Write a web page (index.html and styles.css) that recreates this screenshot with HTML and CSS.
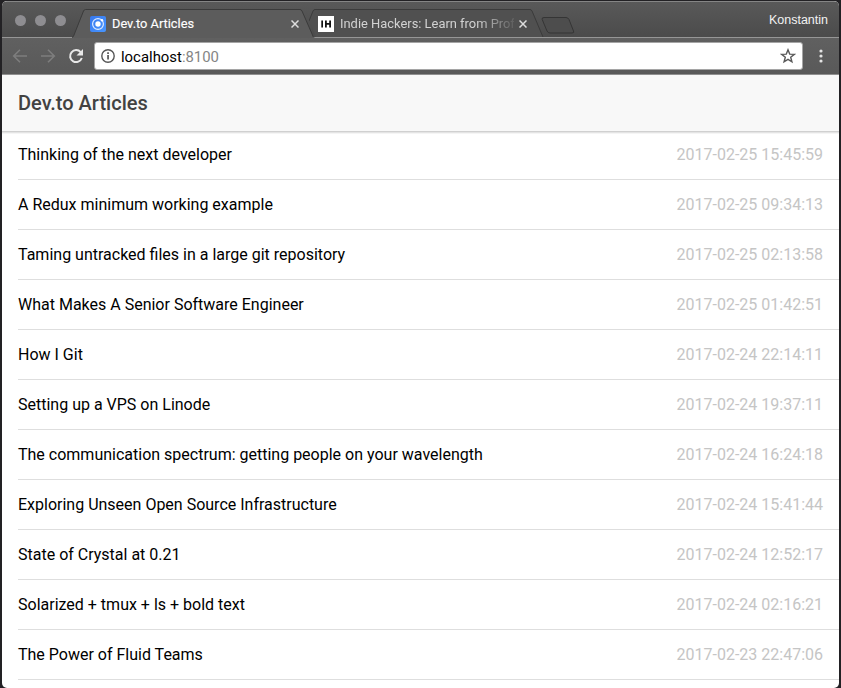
FILE: index.html
```html
<!DOCTYPE html>
<html lang="en">
<head>
<meta charset="utf-8">
<title>Dev.to Articles</title>
<link rel="stylesheet" href="styles.css">
</head>
<body>
<div class="window">
  <div class="tab-strip">
    <div class="lights"><i></i><i></i><i></i></div>
    <div class="tab active">
      <svg class="shape" width="244" height="29" viewBox="0 0 244 29"><path d="M0 29L2 26L11.500 2Q12.200 .5 13.500 .5H228Q229.300 .5 230 2L240.500 26L242 29Z" fill="#5c5c5c"/><path d="M0 28.500Q1.500 28 2 26L11.500 2Q12.200 .5 13.500 .5H228Q229.300 .5 230 2L240.500 26Q241 28 242 28.500" fill="none" stroke="#3b3b3b"/></svg>
      <svg class="favicon" width="16" height="16" viewBox="0 0 16 16"><defs><linearGradient id="blue" y2="1"><stop stop-color="#3778ee"/><stop offset="1" stop-color="#4896ff"/></linearGradient></defs><rect width="16" height="16" rx="2" fill="url(#blue)"/><circle cx="8" cy="8" r="5.400" fill="none" stroke="#dceaff" stroke-width="1.200"/><circle cx="8" cy="8" r="2.700" fill="#fff"/><circle cx="12" cy="4.300" r="1.200" fill="#fff"/></svg>
      <span class="tab-title">Dev.to Articles</span>
      <svg class="close" width="8" height="8" viewBox="0 0 8 8"><path d="M.5 .5 7.500 7.500M7.500 .5 .5 7.500"/></svg>
    </div>
    <div class="tab inactive">
      <svg class="shape" width="236" height="28" viewBox="0 0 236 28"><path d="M0 12 4 2Q4.700 .5 6 .5H221Q222.300 .5 223 2L234 28H7Z" fill="#505050"/><path d="M0 12 4 2Q4.700 .5 6 .5H221Q222.300 .5 223 2L234 28" fill="none" stroke="#3b3b3b"/></svg>
      <svg class="favicon" width="16" height="16" viewBox="0 0 16 16"><path fill="#fff" d="M0 0h16v16H0z"/><path fill="#111" d="M3.300 4.500h1.700v7H3.300zM7 4.500h1.800v2.600h2.400V4.500H13v7h-1.800V8.700H8.800v2.800H7z"/></svg>
      <span class="tab-title">Indie Hackers: Learn from Profi</span>
      <svg class="close" width="8" height="8" viewBox="0 0 8 8"><path d="M.5 .5 7.500 7.500M7.500 .5 .5 7.500"/></svg>
    </div>
    <svg class="new-tab" width="34" height="17" viewBox="0 0 34 17"><path d="M3 .5H25Q27 .5 28 2.500L32.500 14Q33.500 16 31 16H9Q7 16 6 14L1.200 2.500Q.5 .5 3 .5Z" fill="#4d4d4d" stroke="#353535"/></svg>
    <span class="user">Konstantin</span>
  </div>
  <div class="toolbar">
    <svg class="arrow" width="16" height="16" viewBox="0 0 16 16"><path d="M15 8H2M8 1.700 1.700 8 8 14.300"/></svg>
    <svg class="arrow" width="16" height="16" viewBox="0 0 16 16"><path d="M1 8H14M8 1.700 14.300 8 8 14.300"/></svg>
    <svg class="reload" width="16" height="16" viewBox="0 0 16 16"><path d="M12.700 4.200A6 6 0 1 0 13.800 10" fill="none" stroke="#e8e8e8" stroke-width="2"/><path d="M15 1v6.500H8.500Z" fill="#e8e8e8"/></svg>
    <div class="address">
      <svg width="14" height="14" viewBox="0 0 14 14"><circle cx="7" cy="7" r="6.200" fill="none" stroke="#555" stroke-width="1.400"/><path d="M6.200 6h1.700v4.600H6.200zM6.200 3.300h1.700v1.600H6.200z" fill="#555"/></svg>
      <span class="url">localhost<span>:8100</span></span>
      <svg class="star" width="16" height="16" viewBox="0 0 16 16"><path d="M8 1.800 9.700 6.100 14.300 6.400 10.700 9.300 11.900 13.800 8 11.300 4.100 13.800 5.300 9.300 1.700 6.400 6.300 6.100Z" fill="none" stroke="#5a5a5a" stroke-width="1.400"/></svg>
    </div>
    <svg class="menu" width="4" height="14" viewBox="0 0 4 14"><circle cx="2" cy="2" r="1.600"/><circle cx="2" cy="7" r="1.600"/><circle cx="2" cy="12" r="1.600"/></svg>
  </div>
  <header class="page-header"><h1>Dev.to Articles</h1></header>
  <ul class="articles">
    <li><span>Thinking of the next developer</span><time>2017-02-25 15:45:59</time></li>
    <li><span>A Redux minimum working example</span><time>2017-02-25 09:34:13</time></li>
    <li><span>Taming untracked files in a large git repository</span><time>2017-02-25 02:13:58</time></li>
    <li><span>What Makes A Senior Software Engineer</span><time>2017-02-25 01:42:51</time></li>
    <li><span>How I Git</span><time>2017-02-24 22:14:11</time></li>
    <li><span>Setting up a VPS on Linode</span><time>2017-02-24 19:37:11</time></li>
    <li><span>The communication spectrum: getting people on your wavelength</span><time>2017-02-24 16:24:18</time></li>
    <li><span>Exploring Unseen Open Source Infrastructure</span><time>2017-02-24 15:41:44</time></li>
    <li><span>State of Crystal at 0.21</span><time>2017-02-24 12:52:17</time></li>
    <li><span>Solarized + tmux + ls + bold text</span><time>2017-02-24 02:16:21</time></li>
    <li><span>The Power of Fluid Teams</span><time>2017-02-23 22:47:06</time></li>
  </ul>
</div>
</body>
</html>
```
FILE: styles.css
```css
* { box-sizing: border-box; }
body {
  margin: 0;
  height: 688px;
  padding: 1px 2px 0;
  overflow: hidden;
  background: #222124;
  font-family: Roboto, sans-serif;
}
svg { display: block; flex: none; }
.window {
  height: 687px;
  overflow: hidden;
  border-radius: 5px;
  background: #fff;
}
.tab-strip {
  display: flex;
  height: 37px;
  padding-top: 8px;
  border-top: 1px solid #858585;
  border-bottom: 1px solid #969696;
  background: linear-gradient(#595959, #4b4b4b);
  font-size: 13px;
}
.lights {
  display: flex;
  gap: 9px;
  width: 72px;
  padding: 4.500px 0 0 12.500px;
}
.lights i {
  width: 11px;
  height: 11px;
  border-radius: 50%;
  background: #8e8d91;
}
.tab {
  position: relative;
  display: flex;
  height: 29px;
  padding-top: 6px;
}
.shape { position: absolute; left: 0; top: -1px; }
.active { z-index: 1; width: 235px; padding-left: 16px; }
.inactive { width: 231px; padding-left: 9px; }
.favicon, .tab-title, .close { position: relative; }
.tab-title {
  margin-left: 6px;
  line-height: 16px;
  white-space: nowrap;
  color: #fff;
}
.active .tab-title { width: 178px; font-size: 12.800px; -webkit-text-stroke: .15px; }
.inactive .tab-title {
  width: 174px;
  color: #d2d2d2;
  -webkit-mask-image: linear-gradient(90deg, #000 78%, transparent 103%);
  mask-image: linear-gradient(90deg, #000 78%, transparent 103%);
  font-size: 12.900px;
}
.active .shape { left: -2px; }
.close { margin: 4px 0 0 1px; fill: none; stroke: #ddd; stroke-width: 1.500; }
.inactive .close { margin-left: 5px; }
.new-tab { margin: 7px 0 0 1px; }
.user { margin: 3px 11px 0 auto; color: #f2f2f2; font: 12.500px/15px "Liberation Sans", sans-serif; }
.toolbar {
  display: flex;
  align-items: center;
  height: 37px;
  padding: 0 16px 0 10px;
  border-bottom: 1px solid #909090;
  background: linear-gradient(#606060, #595959);
}
.arrow { margin-right: 12px; fill: none; stroke: #7d7d7d; stroke-width: 1.600; }
.reload { margin-right: 10px; }
.address {
  display: flex;
  flex: 1;
  align-items: center;
  height: 28px;
  padding: 0 6px 0 6px;
  border: 1px solid #a5a5a5;
  border-radius: 3px;
  background: #fff;
}
.url { margin-left: 6px; padding-top: 1px; font-size: 14.900px; line-height: 20px; color: #000; }
.url span { color: #858585; }
.star { margin-left: auto; }
.menu { margin-left: 16px; fill: #e4e4e4; }
.page-header {
  position: relative;
  display: flex;
  align-items: center;
  height: 56px;
  padding-left: 16px;
  background: #f8f8f8;
  box-shadow: 0 1px 0 #d0d0d0, 0 2px 0 #e4e4e4, 0 3px 0 #f5f5f5;
}
h1 { margin: 0; font-size: 20px; line-height: 24px; font-weight: 500; color: #424242; }
.articles { margin: -1px 0 0; padding: 0 0 0 16px; list-style: none; }
.articles li {
  display: flex;
  align-items: center;
  justify-content: space-between;
  height: 50px;
  padding-right: 16px;
  border-bottom: 1px solid #dedede;
  font-size: 16px;
  line-height: 20px;
}
.articles time { color: #c5c5c5; }
```
